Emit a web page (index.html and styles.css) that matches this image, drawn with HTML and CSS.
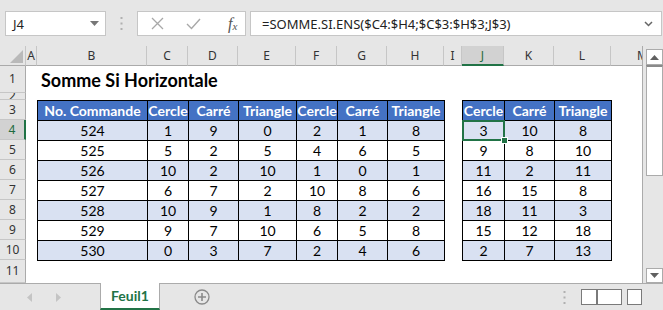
FILE: index.html
```
<!DOCTYPE html>
<html>
	<head>
		<title>Somme Si Horizontale</title>
		<link rel="stylesheet" href="styles.css">
	</head>
	<body>
		<div class="app">
			<div class="formula-bar">
				<div class="name-box">
					<span>J4</span>
					<svg width="9" height="5" viewBox="0 0 9 5"><path d="M0 0h9L4.5 5z" fill="#777"/></svg>
				</div>
				<div class="grip">
					<svg width="3" height="13" viewBox="0 0 3 13"><g fill="#b0b0b0"><rect x="0.5" y="0" width="2" height="2"/><rect x="0.5" y="5.5" width="2" height="2"/><rect x="0.5" y="11" width="2" height="2"/></g></svg>
				</div>
				<div class="fx-buttons">
					<svg width="13" height="13" viewBox="0 0 13 13"><path d="M1 1l11 11M12 1L1 12" stroke="#a8a8a8" stroke-width="1.3" fill="none"/></svg>
					<svg width="15" height="12" viewBox="0 0 15 12"><path d="M1 6l4.5 4.5L14 1" stroke="#a8a8a8" stroke-width="1.4" fill="none"/></svg>
					<span class="fx">f<sub>x</sub></span>
				</div>
				<div class="formula">
					<span>=SOMME.SI.ENS($C4:$H4;$C$3:$H$3;J$3)</span>
					<svg width="9" height="6" viewBox="0 0 9 6"><path d="M1 1l3.5 3.5L8 1" stroke="#666" stroke-width="1.5" fill="none"/></svg>
				</div>
			</div>

			<div class="workspace">
				<div class="sheet">
					<div class="corner"><svg width="13" height="13" viewBox="0 0 13 13"><path d="M13 0v13H0z" fill="#b9b9b9"/></svg></div>
					<div class="col-head">A</div>
					<div class="col-head">B</div>
					<div class="col-head">C</div>
					<div class="col-head">D</div>
					<div class="col-head">E</div>
					<div class="col-head">F</div>
					<div class="col-head">G</div>
					<div class="col-head">H</div>
					<div class="col-head">I</div>
					<div class="col-head active">J</div>
					<div class="col-head">K</div>
					<div class="col-head">L</div>
					<div class="col-head">M</div>

					<div class="row-head">1</div>
					<div class="row-head">2</div>
					<div class="row-head">3</div>
					<div class="row-head active">4</div>
					<div class="row-head">5</div>
					<div class="row-head">6</div>
					<div class="row-head">7</div>
					<div class="row-head">8</div>
					<div class="row-head">9</div>
					<div class="row-head">10</div>
					<div class="row-head">11</div>

					<div class="title">Somme Si Horizontale</div>

					<table class="data orders">
						<colgroup>
							<col style="width: 110px">
							<col style="width: 41px">
							<col style="width: 50px">
							<col style="width: 58px">
							<col style="width: 41px">
							<col style="width: 50px">
							<col style="width: 57px">
						</colgroup>
						<tr>
							<th>No. Commande</th><th>Cercle</th><th>Carré</th><th>Triangle</th><th>Cercle</th><th>Carré</th><th>Triangle</th>
						</tr>
						<tr><td>524</td><td>1</td><td>9</td><td>0</td><td>2</td><td>1</td><td>8</td></tr>
						<tr><td>525</td><td>5</td><td>2</td><td>5</td><td>4</td><td>6</td><td>5</td></tr>
						<tr><td>526</td><td>10</td><td>2</td><td>10</td><td>1</td><td>0</td><td>1</td></tr>
						<tr><td>527</td><td>6</td><td>7</td><td>2</td><td>10</td><td>8</td><td>6</td></tr>
						<tr><td>528</td><td>10</td><td>9</td><td>1</td><td>8</td><td>2</td><td>2</td></tr>
						<tr><td>529</td><td>9</td><td>7</td><td>10</td><td>6</td><td>5</td><td>8</td></tr>
						<tr><td>530</td><td>0</td><td>3</td><td>7</td><td>2</td><td>4</td><td>6</td></tr>
					</table>

					<table class="data totals">
						<colgroup>
							<col style="width: 42px">
							<col style="width: 50px">
							<col style="width: 57px">
						</colgroup>
						<tr><th>Cercle</th><th>Carré</th><th>Triangle</th></tr>
						<tr><td class="selected">3</td><td>10</td><td>8</td></tr>
						<tr><td>9</td><td>8</td><td>10</td></tr>
						<tr><td>11</td><td>2</td><td>11</td></tr>
						<tr><td>16</td><td>15</td><td>8</td></tr>
						<tr><td>18</td><td>11</td><td>3</td></tr>
						<tr><td>15</td><td>12</td><td>18</td></tr>
						<tr><td>2</td><td>7</td><td>13</td></tr>
					</table>
				</div>

				<div class="vscroll">
					<div class="sb-btn"><svg width="9" height="5" viewBox="0 0 9 5"><path d="M4.5 0L9 5H0z" fill="#606060"/></svg></div>
					<div class="sb-thumb"></div>
					<div class="sb-track"></div>
					<div class="sb-btn"><svg width="9" height="5" viewBox="0 0 9 5"><path d="M0 0h9L4.5 5z" fill="#606060"/></svg></div>
				</div>
			</div>

			<div class="tabbar">
				<div class="tab-nav">
					<svg width="5" height="9" viewBox="0 0 5 9"><path d="M5 0v9L0 4.5z" fill="#c4c4c4"/></svg>
					<svg width="5" height="9" viewBox="0 0 5 9"><path d="M0 0v9l5-4.5z" fill="#c4c4c4"/></svg>
				</div>
				<div class="tab">Feuil1</div>
				<div class="add-sheet">
					<svg width="16" height="16" viewBox="0 0 16 16"><circle cx="8" cy="8" r="7" fill="none" stroke="#8a8a8a" stroke-width="1.3"/><path d="M8 4v8M4 8h8" stroke="#8a8a8a" stroke-width="1.6"/></svg>
				</div>
				<div class="hscroll">
					<svg width="3" height="13" viewBox="0 0 3 13"><g fill="#b0b0b0"><rect x="0.5" y="0" width="2" height="2"/><rect x="0.5" y="5.5" width="2" height="2"/><rect x="0.5" y="11" width="2" height="2"/></g></svg>
					<div class="hs-btn"><svg width="5" height="9" viewBox="0 0 5 9"><path d="M5 0v9L0 4.5z" fill="#606060"/></svg></div>
					<div class="hs-thumb"></div>
					<div class="hs-btn right"><svg width="5" height="9" viewBox="0 0 5 9"><path d="M0 0v9l5-4.5z" fill="#606060"/></svg></div>
				</div>
			</div>
		</div>
	</body>
</html>
```

FILE: styles.css
```
body {
	margin: 0;
	padding: 0;
	font-family: "Lato", sans-serif;
}

.app {
	width: 663px;
	height: 310px;
	background-color: #e6e6e6;
	display: flex;
	flex-direction: column;
	overflow: hidden;
}

/* formula bar */

.formula-bar {
	height: 46px;
	box-sizing: border-box;
	padding: 11px 1px 10px 5px;
	display: flex;
	font-family: "Noto Sans", sans-serif;
	font-size: 13px;
	color: #222;
}

.name-box {
	width: 101px;
	box-sizing: border-box;
	background-color: #fff;
	border: 1px solid #c6c6c6;
	display: flex;
	align-items: center;
	justify-content: space-between;
	padding: 0 6px 0 7px;
}

.grip {
	width: 31px;
	display: flex;
	align-items: center;
	justify-content: center;
}

.fx-buttons {
	width: 109px;
	box-sizing: border-box;
	background-color: #fff;
	border: 1px solid #c6c6c6;
	display: flex;
	align-items: center;
	padding: 0 0 0 13px;
	gap: 22px;
}

.fx {
	font-family: "Liberation Serif", serif;
	font-style: italic;
	font-size: 16px;
	color: #555;
	margin-left: 5px;
}

.fx sub {
	font-size: 11px;
	vertical-align: -1px;
}

.formula {
	flex: 1;
	margin-left: 4px;
	box-sizing: border-box;
	background-color: #fff;
	border: 1px solid #c6c6c6;
	display: flex;
	align-items: center;
	justify-content: space-between;
	padding: 0 8px 0 11px;
}

/* sheet */

.workspace {
	height: 237px;
	display: flex;
}

.sheet {
	width: 642px;
	flex-shrink: 0;
	overflow: hidden;
	background-color: #fff;
	display: grid;
	grid-template-columns: 26px 11px 110px 41px 50px 58px 41px 50px 57px 18px 42px 50px 57px 64px;
	grid-template-rows: 20px 27px 7px repeat(8, 20px) 23px;
	font-family: "Noto Sans", sans-serif;
	font-size: 12px;
	color: #333;
}

.corner {
	grid-column: 1;
	grid-row: 1;
	background-color: #e6e6e6;
	border-right: 1px solid #c6c6c6;
	border-bottom: 1px solid #aaa;
	display: flex;
	align-items: flex-end;
	justify-content: flex-end;
	padding: 0 2px 2px 0;
}

.col-head {
	grid-row: 1;
	background-color: #e6e6e6;
	border-right: 1px solid #c6c6c6;
	border-bottom: 1px solid #aaa;
	display: flex;
	align-items: center;
	justify-content: center;
	overflow: hidden;
}

.col-head.active {
	background-color: #d2d2d2;
	color: #1d6b3f;
	border-bottom: 2px solid #217346;
}

.row-head {
	grid-column: 1;
	background-color: #e6e6e6;
	border-right: 1px solid #aaa;
	border-bottom: 1px solid #c6c6c6;
	display: flex;
	align-items: center;
	justify-content: center;
	overflow: hidden;
	line-height: 1;
}

.row-head.active {
	background-color: #d2d2d2;
	color: #1d6b3f;
	border-right: 2px solid #217346;
}

.title {
	grid-column: 3 / 10;
	grid-row: 2;
	font-family: "Lato", sans-serif;
	font-weight: bold;
	font-size: 18px;
	color: #000;
	padding: 3px 0 0 4px;
}

.data {
	border-collapse: collapse;
	table-layout: fixed;
	font-family: "Lato", sans-serif;
	font-size: 14px;
	color: #000;
	align-self: start;
}

.orders {
	grid-column: 3 / 10;
	grid-row: 4 / 12;
	width: 408px;
}

.totals {
	grid-column: 11 / 14;
	grid-row: 4 / 12;
	width: 150px;
}

.data th,
.data td {
	height: 19px;
	padding: 0;
	border: 1px solid #000;
	text-align: center;
	line-height: 18px;
	white-space: nowrap;
}

.data th {
	background-color: #4472c4;
	color: #fff;
	font-weight: bold;
}

.data tr:nth-child(even) td {
	background-color: #d9e1f2;
}

.selected {
	position: relative;
}

.selected::after {
	content: "";
	position: absolute;
	left: -1px;
	top: -1px;
	right: -1px;
	bottom: -1px;
	border: 2px solid #217346;
}

.selected::before {
	content: "";
	position: absolute;
	right: -4px;
	bottom: -4px;
	width: 5px;
	height: 5px;
	background-color: #217346;
	border: 1px solid #fff;
	z-index: 1;
}

/* vertical scrollbar */

.vscroll {
	width: 21px;
	box-sizing: border-box;
	border-left: 1px solid #ababab;
	padding-left: 3px;
	display: flex;
	flex-direction: column;
}

.sb-btn {
	height: 16px;
	box-sizing: border-box;
	background-color: #fff;
	border: 1px solid #ababab;
	display: flex;
	align-items: center;
	justify-content: center;
	margin-top: 3px;
}

.sb-btn:last-child {
	margin-top: 0;
	height: 15px;
}

.sb-thumb {
	height: 108px;
	background-color: #fff;
	border: 1px solid #ababab;
	border-top: 2px solid #8a8a8a;
}

.sb-track {
	flex: 1;
}

/* sheet tabs */

.tabbar {
	flex: 1;
	border-top: 1px solid #ababab;
	display: flex;
	align-items: stretch;
}

.tab-nav {
	width: 100px;
	display: flex;
	align-items: center;
	gap: 24px;
	padding-left: 27px;
	box-sizing: border-box;
}

.tab {
	width: 60px;
	box-sizing: border-box;
	background-color: #fff;
	border-left: 1px solid #ababab;
	border-right: 1px solid #ababab;
	border-bottom: 2px solid #217346;
	margin-top: -1px;
	color: #217346;
	font-family: "Lato", sans-serif;
	font-weight: bold;
	font-size: 14px;
	display: flex;
	align-items: center;
	justify-content: center;
}

.add-sheet {
	width: 84px;
	display: flex;
	align-items: center;
	justify-content: center;
}

.hscroll {
	flex: 1;
	display: flex;
	align-items: center;
	justify-content: flex-end;
	padding-right: 21px;
}

.hscroll svg:first-child {
	margin-right: 15px;
}

.hs-btn {
	width: 15px;
	height: 16px;
	box-sizing: border-box;
	background-color: #fff;
	border: 1px solid #7a7a7a;
	display: flex;
	align-items: center;
	justify-content: center;
}

.hs-btn.right {
	margin-left: 5px;
}

.hs-thumb {
	width: 26px;
	height: 16px;
	box-sizing: border-box;
	background-color: #fff;
	border: 1px solid #7a7a7a;
	border-left: 2px solid #7a7a7a;
}

.hs-btn:first-of-type {
	border-right: none;
}
```
